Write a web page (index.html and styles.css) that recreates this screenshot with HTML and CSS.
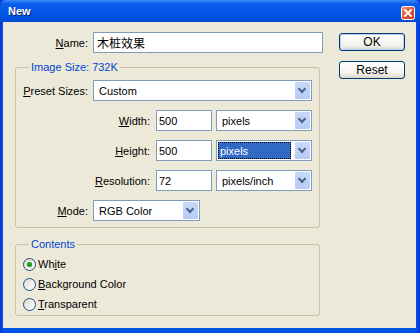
FILE: index.html
```html
<!DOCTYPE html>
<html lang="en">
<head>
    <meta charset="UTF-8">
    <title>New</title>
    <link rel="stylesheet" href="styles.css">
</head>
<body>
<div class="window">
    <div class="titlebar">
        <span class="title">New</span>
        <span class="close">
            <svg width="14" height="14" viewBox="0 0 14 14">
                <defs>
                    <linearGradient id="cg" x1="0" y1="0" x2="1" y2="1">
                        <stop offset="0" stop-color="#f09a80"/>
                        <stop offset="0.5" stop-color="#e0552f"/>
                        <stop offset="1" stop-color="#c03a17"/>
                    </linearGradient>
                </defs>
                <rect x="0.5" y="0.5" width="13" height="13" rx="2" fill="url(#cg)" stroke="#fff"/>
                <path d="M4 4 L10 10 M10 4 L4 10" stroke="#fff" stroke-width="1.8" stroke-linecap="square"/>
            </svg>
        </span>
    </div>

    <div class="client">
        <div class="main">
            <div class="name-row">
                <label class="lbl short"><u>N</u>ame:</label>
                <div class="textbox">木桩效果</div>
            </div>

            <fieldset class="group size">
                <legend>Image Size: 732K</legend>
                <div class="row">
                    <label class="lbl short"><u>P</u>reset Sizes:</label>
                    <div class="combo preset"><span class="val">Custom</span><span class="arrow"></span></div>
                </div>
                <div class="row">
                    <label class="lbl long"><u>W</u>idth:</label>
                    <div class="textbox num">500</div>
                    <div class="combo unit"><span class="val">pixels</span><span class="arrow"></span></div>
                </div>
                <div class="row">
                    <label class="lbl long"><u>H</u>eight:</label>
                    <div class="textbox num">500</div>
                    <div class="combo unit"><span class="val focus">pixels</span><span class="arrow"></span></div>
                </div>
                <div class="row">
                    <label class="lbl long"><u>R</u>esolution:</label>
                    <div class="textbox num">72</div>
                    <div class="combo unit"><span class="val">pixels/inch</span><span class="arrow"></span></div>
                </div>
                <div class="row">
                    <label class="lbl short"><u>M</u>ode:</label>
                    <div class="combo mode"><span class="val">RGB Color</span><span class="arrow"></span></div>
                </div>
            </fieldset>

            <fieldset class="group contents">
                <legend>Contents</legend>
                <div class="option"><span class="radio checked"></span><span>Wh<u>i</u>te</span></div>
                <div class="option"><span class="radio"></span><span><u>B</u>ackground Color</span></div>
                <div class="option"><span class="radio"></span><span><u>T</u>ransparent</span></div>
            </fieldset>
        </div>

        <div class="buttons">
            <button class="btn default">OK</button>
            <button class="btn">Reset</button>
        </div>
    </div>
</div>
</body>
</html>
```

FILE: styles.css
```css
* {
    box-sizing: border-box;
}
body {
    margin: 0;
    font-family: "Liberation Sans", "Noto Sans CJK SC", sans-serif;
    font-size: 11px;
    color: #000;
}
.window {
    width: 420px;
    height: 333px;
    background: linear-gradient(to right, #0831d9, #0055e5 3px, #0055e5 416px, #0831d9);
    padding: 0 4px 5px 3px;
    display: flex;
    flex-direction: column;
}
.titlebar {
    height: 22px;
    margin: 0 -4px 0 -3px;
    padding: 0 5px 0 8px;
    background: linear-gradient(#3d8ef7, #0a5ce9 4px, #0055e5 16px, #0048d0);
    display: flex;
    align-items: center;
    justify-content: space-between;
    border-radius: 6px 6px 0 0;
}
.title {
    color: #fff;
    font-weight: bold;
    font-size: 11px;
    text-shadow: 1px 1px 0 #0a1e6e;
}
.close {
    display: flex;
    margin-top: 3px;
}
.client {
    flex: 1;
    background: #ece9d8;
    display: flex;
}
.main {
    width: 320px;
    padding: 10px 0 0 12px;
}
.name-row {
    display: flex;
    align-items: center;
    gap: 5px;
    height: 21px;
}
.name-row .textbox {
    width: 230px;
}
.lbl {
    text-align: right;
    white-space: nowrap;
}
.lbl.short {
    width: 65px;
}
.name-row .lbl.short {
    width: 73px;
}
.lbl.long {
    width: 127px;
    margin-right: 1px;
}
.textbox {
    height: 21px;
    border: 1px solid #7f9db9;
    background: #fff;
    padding: 0 3px;
    display: flex;
    align-items: center;
    font-size: 11px;
}
.name-row .textbox {
    font-size: 12px;
}
.textbox.num {
    width: 56px;
    padding-left: 2px;
}
.group {
    width: 305px;
    margin: 0;
    border: 1px solid #c5c1ad;
    border-radius: 3px;
    padding: 6px 0 6px 7px;
}
.group legend {
    margin-left: 6px;
    padding: 0 2px;
    height: 14px;
    line-height: 14px;
    color: #0046d5;
}
.size {
    margin-top: 7px;
    display: flex;
    flex-direction: column;
    gap: 9px;
}
.row {
    display: flex;
    align-items: center;
    gap: 5px;
    height: 21px;
}
.row .combo.unit {
    margin-left: -1px;
}
.combo {
    height: 21px;
    border: 1px solid #7f9db9;
    background: #fff;
    padding: 1px;
    display: flex;
}
.combo.preset {
    width: 219px;
}
.combo.unit {
    width: 96px;
}
.combo.mode {
    width: 107px;
}
.val {
    flex: 1;
    display: flex;
    align-items: center;
    padding-left: 4px;
    margin-right: 4px;
}
.val.focus {
    background: #316ac5;
    color: #fff;
    outline: 1px dotted #000;
    outline-offset: -1px;
    padding-left: 2px;
}
.arrow {
    width: 15px;
    background: linear-gradient(#c8d8fa, #b6cbf5);
    border-radius: 1px;
    position: relative;
}
.arrow::after {
    content: "";
    position: absolute;
    left: 4px;
    top: 4px;
    width: 4px;
    height: 4px;
    border-right: 2px solid #4d6185;
    border-bottom: 2px solid #4d6185;
    transform: rotate(45deg);
}
.contents {
    margin-top: 9px;
    padding-top: 3px;
    padding-bottom: 1px;
}
.option {
    height: 20px;
    display: flex;
    align-items: center;
    gap: 2px;
}
.radio {
    width: 13px;
    height: 13px;
    border-radius: 50%;
    border: 1px solid #1c5180;
    background: linear-gradient(135deg, #dcdcd5, #fff);
    position: relative;
}
.radio.checked::after {
    content: "";
    position: absolute;
    left: 3px;
    top: 3px;
    width: 5px;
    height: 5px;
    border-radius: 50%;
    background: #21a121;
    box-shadow: 0 0 1px #5fd35f;
}
.buttons {
    margin-left: 16px;
    padding-top: 11px;
    display: flex;
    flex-direction: column;
    gap: 10px;
}
.btn {
    width: 66px;
    height: 18px;
    padding: 0;
    font-family: inherit;
    font-size: 12px;
    border: 1px solid #003c74;
    border-radius: 3px;
    background: linear-gradient(#fff, #f3f2ee 70%, #d8d4ca);
    color: #000;
}
.btn.default {
    box-shadow: inset 0 0 0 1px #b9cff3;
}
```
